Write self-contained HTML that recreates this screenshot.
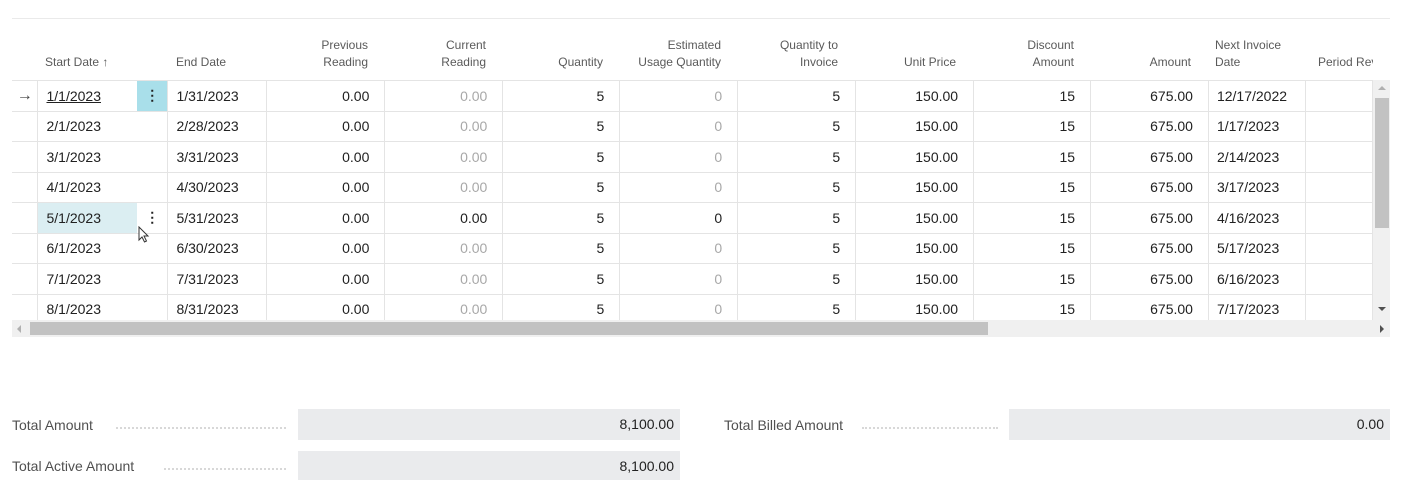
<!DOCTYPE html>
<html><head><meta charset="utf-8">
<style>
body{margin:0;width:1411px;height:480px;background:#fff;overflow:hidden;font-family:"Liberation Sans",sans-serif;color:#212121;position:relative}
.topline{position:absolute;left:12px;top:18px;width:1378px;height:1px;background:#eaeaea}
.hdr{position:absolute;top:37px;font-size:12px;color:#5a5a5a;line-height:17px}
.r{text-align:right}
.grid{position:absolute;left:12px;top:80px;width:1361px;height:240px;overflow:hidden}
table{border-collapse:collapse;table-layout:fixed;font-size:14px}
td{height:29.5px;border:1px solid #e4e4e4;padding:0;white-space:nowrap;overflow:hidden}
td.n{text-align:right;padding-right:15px}
td.l{padding-left:8px}
td.g{color:#a8a8a8}
td.nb{border-left:none}
td.ns{border-right:none}
.vs{position:absolute;left:1373px;top:80px;width:17px;height:240px;background:#f0f0f0}
.vthumb{position:absolute;left:1375px;top:98px;width:14px;height:130px;background:#c2c2c2}
.hs{position:absolute;left:12px;top:320px;width:1378px;height:17px;background:#f0f0f0}
.hthumb{position:absolute;left:30px;top:322px;width:958px;height:13px;background:#c2c2c2}
.lbl{position:absolute;font-size:14px;color:#505050}
.dots{display:inline-block;border-bottom:2px dotted #d8d8d8;position:absolute}
.box{position:absolute;background:#eaebed;font-size:14px;text-align:right;box-sizing:border-box;padding-right:6px}
</style></head><body>
<div class="topline"></div>
<div class="hdr" style="left:45px;top:54px">Start Date ↑</div>
<div class="hdr" style="left:176px;top:54px">End Date</div>
<div class="hdr r" style="left:270px;width:98px">Previous<br>Reading</div>
<div class="hdr r" style="left:388px;width:98px">Current<br>Reading</div>
<div class="hdr r" style="left:503px;width:100px;top:54px">Quantity</div>
<div class="hdr r" style="left:600px;width:121px">Estimated<br>Usage Quantity</div>
<div class="hdr r" style="left:740px;width:98px">Quantity to<br>Invoice</div>
<div class="hdr r" style="left:856px;width:100px;top:54px">Unit Price</div>
<div class="hdr r" style="left:974px;width:100px">Discount<br>Amount</div>
<div class="hdr r" style="left:1091px;width:100px;top:54px">Amount</div>
<div class="hdr" style="left:1215px">Next Invoice<br>Date</div>
<div class="hdr" style="left:1318px;top:54px;width:55px;overflow:hidden;white-space:nowrap">Period Revenue</div>

<div class="grid"><table>
<colgroup><col style="width:26px"><col style="width:99px"><col style="width:31px"><col style="width:99px"><col style="width:118px"><col style="width:118px"><col style="width:117px"><col style="width:118px"><col style="width:118px"><col style="width:118px"><col style="width:117px"><col style="width:118px"><col style="width:97px"><col style="width:67px"></colgroup>
<tr><td style="text-align:center;border-left:none;font-size:16px;color:#444">→</td><td class="l ns"><u>1/1/2023</u></td><td class="nb" style="background:#a9dfea;text-align:center;font-weight:bold">⋮</td><td class="l">1/31/2023</td><td class="n">0.00</td><td class="n g">0.00</td><td class="n">5</td><td class="n g">0</td><td class="n">5</td><td class="n">150.00</td><td class="n">15</td><td class="n">675.00</td><td class="l">12/17/2022</td><td></td></tr>
<tr><td style="border-left:none"></td><td class="l ns">2/1/2023</td><td class="nb"></td><td class="l">2/28/2023</td><td class="n">0.00</td><td class="n g">0.00</td><td class="n">5</td><td class="n g">0</td><td class="n">5</td><td class="n">150.00</td><td class="n">15</td><td class="n">675.00</td><td class="l">1/17/2023</td><td></td></tr>
<tr><td style="border-left:none"></td><td class="l ns">3/1/2023</td><td class="nb"></td><td class="l">3/31/2023</td><td class="n">0.00</td><td class="n g">0.00</td><td class="n">5</td><td class="n g">0</td><td class="n">5</td><td class="n">150.00</td><td class="n">15</td><td class="n">675.00</td><td class="l">2/14/2023</td><td></td></tr>
<tr><td style="border-left:none"></td><td class="l ns">4/1/2023</td><td class="nb"></td><td class="l">4/30/2023</td><td class="n">0.00</td><td class="n g">0.00</td><td class="n">5</td><td class="n g">0</td><td class="n">5</td><td class="n">150.00</td><td class="n">15</td><td class="n">675.00</td><td class="l">3/17/2023</td><td></td></tr>
<tr><td style="border-left:none"></td><td class="l ns" style="background:#dbeef2">5/1/2023</td><td class="nb" style="text-align:center;font-weight:bold">⋮</td><td class="l">5/31/2023</td><td class="n">0.00</td><td class="n">0.00</td><td class="n">5</td><td class="n">0</td><td class="n">5</td><td class="n">150.00</td><td class="n">15</td><td class="n">675.00</td><td class="l">4/16/2023</td><td></td></tr>
<tr><td style="border-left:none"></td><td class="l ns">6/1/2023</td><td class="nb"></td><td class="l">6/30/2023</td><td class="n">0.00</td><td class="n g">0.00</td><td class="n">5</td><td class="n g">0</td><td class="n">5</td><td class="n">150.00</td><td class="n">15</td><td class="n">675.00</td><td class="l">5/17/2023</td><td></td></tr>
<tr><td style="border-left:none"></td><td class="l ns">7/1/2023</td><td class="nb"></td><td class="l">7/31/2023</td><td class="n">0.00</td><td class="n g">0.00</td><td class="n">5</td><td class="n g">0</td><td class="n">5</td><td class="n">150.00</td><td class="n">15</td><td class="n">675.00</td><td class="l">6/16/2023</td><td></td></tr>
<tr><td style="border-left:none"></td><td class="l ns">8/1/2023</td><td class="nb"></td><td class="l">8/31/2023</td><td class="n">0.00</td><td class="n g">0.00</td><td class="n">5</td><td class="n g">0</td><td class="n">5</td><td class="n">150.00</td><td class="n">15</td><td class="n">675.00</td><td class="l">7/17/2023</td><td></td></tr>
</table></div>
<svg style="position:absolute;left:138px;top:226px" width="12" height="18" viewBox="0 0 12 18"><path d="M1 1 L1 14 L4 11 L6.5 16 L8.5 15 L6 10 L10 10 Z" fill="#fff" stroke="#333" stroke-width="1"/></svg>
<div class="vs"></div><div class="vthumb"></div>
<div style="position:absolute;left:1378px;top:86px;width:0;height:0;border-left:4px solid transparent;border-right:4px solid transparent;border-bottom:4px solid #b0b0b0"></div>
<div style="position:absolute;left:1378px;top:307px;width:0;height:0;border-left:4px solid transparent;border-right:4px solid transparent;border-top:4px solid #505050"></div>
<div class="hs"></div><div class="hthumb"></div>
<div style="position:absolute;left:17px;top:325px;width:0;height:0;border-top:4px solid transparent;border-bottom:4px solid transparent;border-right:4px solid #b0b0b0"></div>
<div style="position:absolute;left:1380px;top:325px;width:0;height:0;border-top:4px solid transparent;border-bottom:4px solid transparent;border-left:4px solid #505050"></div>

<div class="lbl" style="left:12px;top:417px">Total Amount</div>
<div class="dots" style="left:116px;top:427px;width:170px"></div>
<div class="box" style="left:298px;top:409px;width:382px;height:31px;line-height:31px">8,100.00</div>
<div class="lbl" style="left:12px;top:458px">Total Active Amount</div>
<div class="dots" style="left:164px;top:468px;width:122px"></div>
<div class="box" style="left:298px;top:451px;width:382px;height:29px;line-height:31px">8,100.00</div>
<div class="lbl" style="left:724px;top:417px">Total Billed Amount</div>
<div class="dots" style="left:862px;top:427px;width:136px"></div>
<div class="box" style="left:1009px;top:409px;width:381px;height:31px;line-height:31px">0.00</div>
</body></html>
